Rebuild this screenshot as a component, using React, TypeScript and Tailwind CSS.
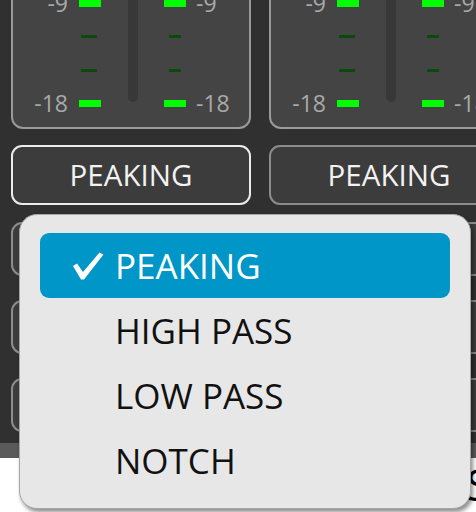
import React from "react";

const FONT = { fontFamily: '"Open Sans", "Noto Sans", sans-serif' };

type Tick = { label?: string };
const ticks: Tick[] = [
  { label: "0" },
  {},
  {},
  { label: "-9" },
  {},
  {},
  { label: "-18" },
];

function MeterSide({ side }: { side: "left" | "right" }) {
  return (
    <div className="flex flex-col">
      {ticks.map((t, i) => (
        <div key={i} className="h-[33.33px] flex items-center">
          {side === "left" ? (
            <>
              <div className="w-[55px] text-right text-[23px] leading-none text-[#a9a9a9]">
                {t.label ?? ""}
              </div>
              <div className="w-[22px] ml-[11px] flex justify-center">
                {t.label ? (
                  <div className="w-[22px] h-[7px] bg-[#00ff00]" />
                ) : (
                  <div className="w-[16px] h-[3px] bg-[#0b4a0b] -ml-[3px]" />
                )}
              </div>
            </>
          ) : (
            <>
              <div className="w-[22px] flex justify-center">
                {t.label ? (
                  <div className="w-[22px] h-[7px] bg-[#00ff00]" />
                ) : (
                  <div className="w-[12px] h-[3px] bg-[#0b4a0b]" />
                )}
              </div>
              <div className="ml-[10px] w-[50px] text-left text-[23px] leading-none text-[#a9a9a9]">
                {t.label ?? ""}
              </div>
            </>
          )}
        </div>
      ))}
    </div>
  );
}

function Panel() {
  return (
    <div className="w-[240px] shrink-0 rounded-[12px] border-2 border-[#9a9a9a] bg-[#444444] pt-[10px] pb-[7px] flex">
      <MeterSide side="left" />
      <div className="ml-[27px] w-[10px] mb-[18px] rounded-b-full bg-[#383838]" />
      <div className="ml-[26px]">
        <MeterSide side="right" />
      </div>
    </div>
  );
}

function Btn({ active, label, h }: { active?: boolean; label?: string; h: string }) {
  return (
    <div
      className={`w-[240px] shrink-0 rounded-[11px] border-2 bg-[#3c3c3c] flex items-center justify-center text-[29.5px] text-[#f2f2f2] ${
        active ? "border-[#ececec]" : "border-[#8c8c8c]"
      } ${h}`}
    >
      {label}
    </div>
  );
}

function Check() {
  return (
    <svg width="32" height="28" viewBox="0 0 32 28" className="shrink-0">
      <path
        d="M1 14 L5 11.5 L11 20 L27.5 0.5 L31.5 2.5 L12 27.5 L9 27.5 Z"
        fill="#ffffff"
      />
    </svg>
  );
}

export default function App() {
  const items = ["PEAKING", "HIGH PASS", "LOW PASS", "NOTCH"];
  return (
    <div className="relative w-[476px] h-[512px] overflow-hidden bg-white" style={FONT}>
      <div className="h-[443px] bg-[#303030] overflow-hidden">
        <div className="flex flex-col px-[11px] mt-[-125px]">
          <div className="flex gap-[18px]">
            <Panel />
            <Panel />
          </div>
          <div className="flex gap-[18px] mt-[16px]">
            <Btn active label="PEAKING" h="h-[60px]" />
            <Btn label="PEAKING" h="h-[60px]" />
          </div>
          <div className="flex gap-[18px] mt-[17px]">
            <Btn h="h-[54px]" />
            <Btn h="h-[54px]" />
          </div>
          <div className="flex gap-[18px] mt-[24px]">
            <Btn h="h-[54px]" />
            <Btn h="h-[54px]" />
          </div>
          <div className="flex gap-[18px] mt-[24px]">
            <Btn h="h-[54px]" />
            <Btn h="h-[54px]" />
          </div>
        </div>
      </div>
      <div className="h-[15px] bg-[#5a5a5a]" />
      <div className="absolute left-[466px] top-[462px] text-[44px] leading-none text-black">S</div>

      <div className="absolute left-[19px] top-[214px] w-[452px] h-[295px] rounded-[18px] border border-[#a6a6a6] bg-[#e7e7e7] shadow-[2px_3px_4px_rgba(0,0,0,0.45)] pt-[18px] px-[20px] flex flex-col">
        {items.map((it, i) => (
          <div
            key={it}
            className={`h-[65px] shrink-0 rounded-[9px] flex items-center ${
              i === 0 ? "bg-[#0096c8] text-white" : "text-[#111111]"
            }`}
          >
            <div className="w-[75px] flex justify-end pr-[11px]">{i === 0 ? <Check /> : null}</div>
            <div className="text-[35px] leading-none">{it}</div>
          </div>
        ))}
      </div>
    </div>
  );
}
